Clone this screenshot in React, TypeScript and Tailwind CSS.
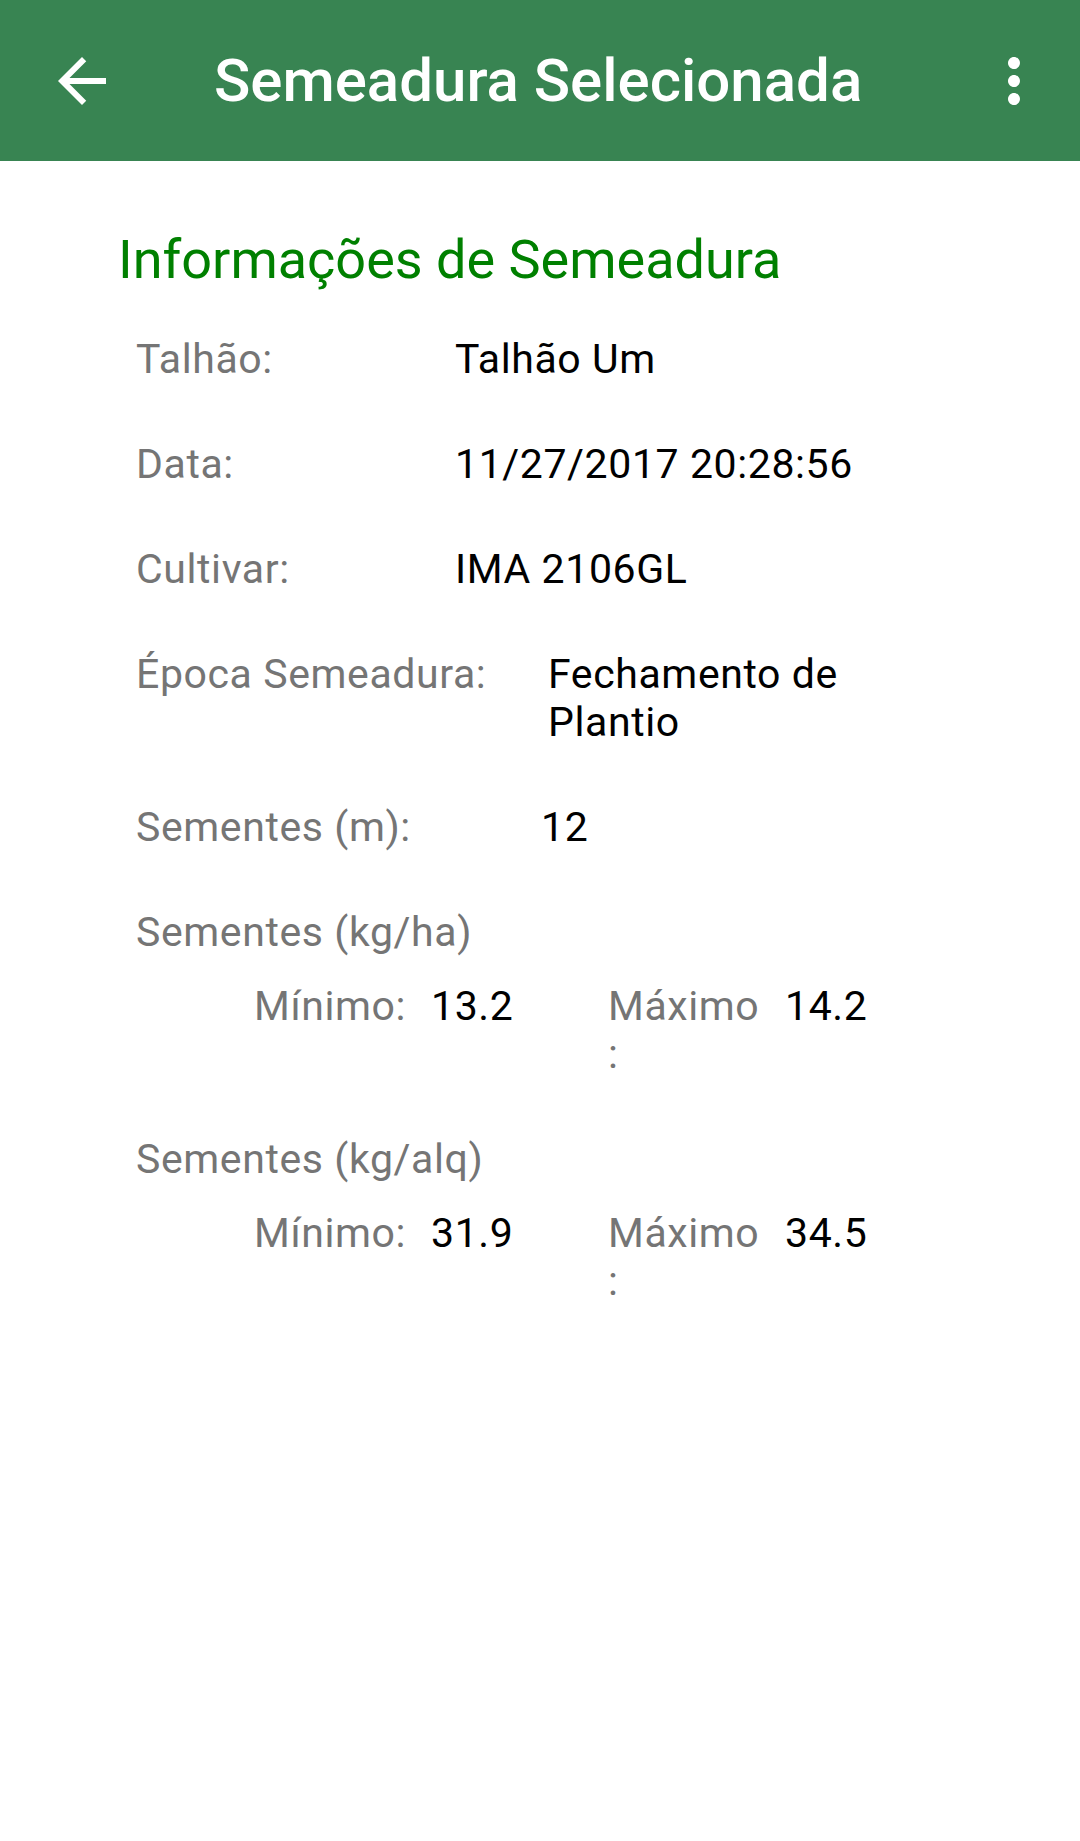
import React from "react";

const font = { fontFamily: "Roboto, 'Noto Sans', sans-serif" };

function Row({ label, value, valueLeft }: { label: string; value: React.ReactNode; valueLeft: string }) {
  return (
    <div className="flex text-[41px] leading-[48px] tracking-[0.6px]">
      <div className={`${valueLeft} shrink-0 text-[#757575]`}>{label}</div>
      <div className="text-black">{value}</div>
    </div>
  );
}

function MinMax({ title, min, max }: { title: string; min: string; max: string }) {
  return (
    <div className="flex flex-col text-[41px] leading-[48px] tracking-[0.6px]">
      <div className="text-[#757575]">{title}</div>
      <div className="mt-[26px] flex pl-[118px]">
        <div className="w-[177px] shrink-0 text-[#757575]">Mínimo:</div>
        <div className="w-[177px] shrink-0 text-black">{min}</div>
        <div className="w-[177px] shrink-0 text-[#757575]">
          Máximo
          <br />:
        </div>
        <div className="text-black">{max}</div>
      </div>
    </div>
  );
}

export default function App() {
  return (
    <div className="min-h-[1841px] w-[1080px] bg-white" style={font}>
      <div className="flex h-[161px] items-center bg-[#388452]">
        <svg className="ml-[46px] h-[72px] w-[72px] shrink-0" viewBox="0 0 24 24" fill="white">
          <path d="M20 11H7.83l5.59-5.59L12 4l-8 8 8 8 1.41-1.41L7.83 13H20v-2z" />
        </svg>
        <div className="ml-[96px] text-[60px] font-medium leading-none text-white">Semeadura Selecionada</div>
        <svg className="ml-auto mr-[30px] h-[72px] w-[72px] shrink-0" viewBox="0 0 24 24" fill="white">
          <path d="M12 8c1.1 0 2-.9 2-2s-.9-2-2-2-2 .9-2 2 .9 2 2 2zm0 2c-1.1 0-2 .9-2 2s.9 2 2 2 2-.9 2-2-.9-2-2-2zm0 6c-1.1 0-2 .9-2 2s.9 2 2 2 2-.9 2-2-.9-2-2-2z" />
        </svg>
      </div>
      <div className="pl-[118px] pt-[67px]">
        <div className="text-[54px] leading-[64px] text-[#008000]">Informações de Semeadura</div>
        <div className="mt-[43px] flex flex-col gap-[57px] pl-[18px]">
          <Row label="Talhão:" value="Talhão Um" valueLeft="w-[319px]" />
          <Row label="Data:" value="11/27/2017 20:28:56" valueLeft="w-[319px]" />
          <Row label="Cultivar:" value="IMA 2106GL" valueLeft="w-[319px]" />
          <Row
            label="Época Semeadura:"
            value={
              <>
                Fechamento de
                <br />
                Plantio
              </>
            }
            valueLeft="w-[412px]"
          />
          <Row label="Sementes (m):" value="12" valueLeft="w-[405px]" />
          <MinMax title="Sementes (kg/ha)" min="13.2" max="14.2" />
          <MinMax title="Sementes (kg/alq)" min="31.9" max="34.5" />
        </div>
      </div>
    </div>
  );
}
